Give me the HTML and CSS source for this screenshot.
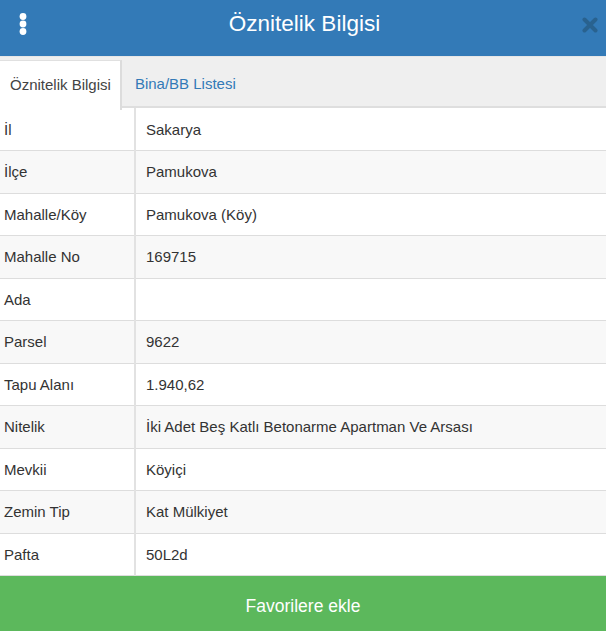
FILE: index.html
```html
<!DOCTYPE html>
<html lang="tr">
<head>
  <meta charset="UTF-8">
  <title>Öznitelik Bilgisi</title>
  <meta name="viewport" content="width=device-width, initial-scale=1">
  <link rel="stylesheet" href="styles.css">
</head>
<body>
  <div class="panel">
    <div class="panel-header">
      <span class="menu-btn">
        <svg width="8" height="22" viewBox="0 0 8 22"><circle cx="4" cy="3.5" r="3.4" fill="#fff"/><circle cx="4" cy="11" r="3.4" fill="#fff"/><circle cx="4" cy="18.5" r="3.4" fill="#fff"/></svg>
      </span>
      <h1>Öznitelik Bilgisi</h1>
      <span class="close-btn">
        <svg width="16" height="16" viewBox="0 0 16 16"><path d="M2.5 2.5 L13.5 13.5 M13.5 2.5 L2.5 13.5" stroke="#29628f" stroke-width="4" stroke-linecap="round"/></svg>
      </span>
    </div>

    <ul class="tabs">
      <li class="tab active">Öznitelik Bilgisi</li>
      <li class="tab">Bina/BB Listesi</li>
    </ul>

    <div class="panel-body">
      <table class="attr-table">
        <tr><td class="label">İl</td><td>Sakarya</td></tr>
        <tr><td class="label">İlçe</td><td>Pamukova</td></tr>
        <tr><td class="label">Mahalle/Köy</td><td>Pamukova (Köy)</td></tr>
        <tr><td class="label">Mahalle No</td><td>169715</td></tr>
        <tr><td class="label">Ada</td><td></td></tr>
        <tr><td class="label">Parsel</td><td>9622</td></tr>
        <tr><td class="label">Tapu Alanı</td><td>1.940,62</td></tr>
        <tr><td class="label">Nitelik</td><td>İki Adet Beş Katlı Betonarme Apartman Ve Arsası</td></tr>
        <tr><td class="label">Mevkii</td><td>Köyiçi</td></tr>
        <tr><td class="label">Zemin Tip</td><td>Kat Mülkiyet</td></tr>
        <tr><td class="label">Pafta</td><td>50L2d</td></tr>
      </table>
    </div>

    <button class="fav-btn">Favorilere ekle</button>
  </div>
</body>
</html>
```

FILE: styles.css
```css
html, body {
  margin: 0;
  height: 100%;
}
body {
  font-family: "Liberation Sans", Arial, sans-serif;
  font-size: 15px;
  color: #333;
  background: #fff;
}
.panel {
  display: flex;
  flex-direction: column;
  height: 100%;
}
.panel-header {
  height: 56px;
  flex: none;
  background-color: #337ab7;
  display: flex;
  align-items: center;
  padding: 0 8px 0 19px;
}
.panel-header h1 {
  flex: 1;
  margin: 0 0 8px;
  text-align: center;
  color: #fff;
  font-weight: normal;
  font-size: 22.5px;
}
.menu-btn {
  display: flex;
  margin-bottom: 9px;
}
.close-btn {
  display: flex;
  margin-bottom: 6px;
}
.tabs {
  flex: none;
  list-style: none;
  margin: 0;
  padding: 3px 0 0;
  height: 52px;
  box-sizing: border-box;
  display: flex;
  background: #efefef;
  border-top: 1px solid #e6e6e6;
  border-bottom: 2px solid #dedede;
}
.tab {
  padding: 0 15px 0 13px;
  line-height: 48px;
  color: #337ab7;
}
.tab.active {
  color: #444;
  background: #fff;
  padding: 0 9px 0 10px;
  border-top: 1px solid #e0e0e0;
  border-right: 2px solid #dcdcdc;
  margin-bottom: -2px;
  height: 49px;
}
.panel-body {
  flex: 1;
  overflow: hidden;
}
.attr-table {
  width: 100%;
  border-collapse: collapse;
}
.attr-table td {
  height: 42.5px;
  padding: 0 10px;
  border-bottom: 1px solid #ddd;
  box-sizing: border-box;
}
.attr-table td.label {
  width: 135px;
  padding-left: 4px;
  border-right: 2px solid #e2e2e2;
}
.attr-table tr:nth-child(even) {
  background: #f8f8f8;
}
.fav-btn {
  flex: none;
  height: 55px;
  border: none;
  background-color: #5cb85c;
  color: #fff;
  font-family: inherit;
  font-size: 17.5px;
  padding: 6px 0 0;
}
```
